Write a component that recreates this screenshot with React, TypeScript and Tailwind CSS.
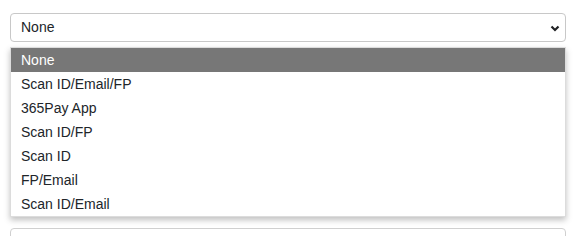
import React from "react";

const options = [
  "None",
  "Scan ID/Email/FP",
  "365Pay App",
  "Scan ID/FP",
  "Scan ID",
  "FP/Email",
  "Scan ID/Email",
];

export default function App() {
  const selected = "None";
  return (
    <div
      className="h-[236px] w-[576px] overflow-hidden bg-white px-[10px] pt-[13px] text-[14px] text-[#212529]"
      style={{ fontFamily: '"Liberation Sans", Arial, sans-serif' }}
    >
      <div className="relative">
        <div className="flex h-[29px] items-center justify-between rounded-[4px] border border-[#c8c8c8] bg-white pl-[10px] pr-[4px]">
          <span>{selected}</span>
          <svg width="10" height="8" viewBox="0 0 10 8" className="mr-[1px]">
            <path d="M1.5 2.5 L5 6 L8.5 2.5" fill="none" stroke="#202124" strokeWidth="2.2" />
          </svg>
        </div>

        <ul className="absolute left-0 right-0 top-[34px] z-10 border border-[#dcdcdc] bg-white shadow-[0_3px_6px_rgba(0,0,0,0.25)]">
          {options.map((o) => (
            <li
              key={o}
              className={
                o === selected
                  ? "flex h-[24px] items-center bg-[#777777] pl-[10px] text-white"
                  : "flex h-[24px] items-center pl-[10px]"
              }
            >
              {o}
            </li>
          ))}
        </ul>

        <div className="mt-[186px] h-[30px] rounded-[4px] border border-[#d0d0d0] bg-white" />
      </div>
    </div>
  );
}
